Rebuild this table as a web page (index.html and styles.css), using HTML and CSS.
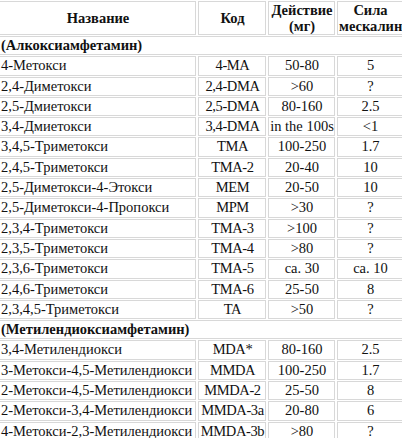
FILE: index.html
```html
<!DOCTYPE html>
<html lang="ru">
<head>
    <meta charset="UTF-8">
    <title>Амфетамины</title>
    <link rel="stylesheet" href="styles.css">
</head>
<body>
    <table class="drugs">
        <colgroup>
            <col class="col-name">
            <col class="col-code">
            <col class="col-dose">
            <col class="col-power">
        </colgroup>
        <thead>
            <tr>
                <th>Название</th>
                <th>Код</th>
                <th>Действие<br>(мг)</th>
                <th>Сила<br>мескалин</th>
            </tr>
        </thead>
        <tbody>
            <tr class="group"><td colspan="4">(Алкоксиамфетамин)</td></tr>
            <tr><td>4-Метокси</td><td>4-MA</td><td>50-80</td><td>5</td></tr>
            <tr><td>2,4-Диметокси</td><td>2,4-DMA</td><td>&gt;60</td><td>?</td></tr>
            <tr><td>2,5-Дмиетокси</td><td>2,5-DMA</td><td>80-160</td><td>2.5</td></tr>
            <tr><td>3,4-Дмиетокси</td><td>3,4-DMA</td><td>in the 100s</td><td>&lt;1</td></tr>
            <tr><td>3,4,5-Триметокси</td><td>TMA</td><td>100-250</td><td>1.7</td></tr>
            <tr><td>2,4,5-Триметокси</td><td>TMA-2</td><td>20-40</td><td>10</td></tr>
            <tr><td>2,5-Диметокси-4-Этокси</td><td>MEM</td><td>20-50</td><td>10</td></tr>
            <tr><td>2,5-Диметокси-4-Пропокси</td><td>MPM</td><td>&gt;30</td><td>?</td></tr>
            <tr><td>2,3,4-Триметокси</td><td>TMA-3</td><td>&gt;100</td><td>?</td></tr>
            <tr><td>2,3,5-Триметокси</td><td>TMA-4</td><td>&gt;80</td><td>?</td></tr>
            <tr><td>2,3,6-Триметокси</td><td>TMA-5</td><td>ca. 30</td><td>ca. 10</td></tr>
            <tr><td>2,4,6-Триметокси</td><td>TMA-6</td><td>25-50</td><td>8</td></tr>
            <tr><td>2,3,4,5-Триметокси</td><td>TA</td><td>&gt;50</td><td>?</td></tr>
            <tr class="group"><td colspan="4">(Метилендиоксиамфетамин)</td></tr>
            <tr><td>3,4-Метилендиокси</td><td>MDA*</td><td>80-160</td><td>2.5</td></tr>
            <tr><td>3-Метокси-4,5-Метилендиокси</td><td>MMDA</td><td>100-250</td><td>1.7</td></tr>
            <tr><td>2-Метокси-4,5-Метилендиокси</td><td>MMDA-2</td><td>25-50</td><td>8</td></tr>
            <tr><td>2-Метокси-3,4-Метилендиокси</td><td>MMDA-3a</td><td>20-80</td><td>6</td></tr>
            <tr><td>4-Метокси-2,3-Метилендиокси</td><td>MMDA-3b</td><td>&gt;80</td><td>?</td></tr>
        </tbody>
    </table>
</body>
</html>
```

FILE: styles.css
```css
body {
    margin: 0;
    background-color: #ffffff;
    color: #111111;
    font-family: "Liberation Serif", "Times New Roman", serif;
    font-size: 14.5px;
    overflow: hidden;
}
.drugs {
    table-layout: fixed;
    width: 408px;
    margin-left: -3px;
    border-collapse: separate;
    border-spacing: 2px 1px;
}
.col-name { width: 197px; }
.col-code { width: 68px; }
.col-dose { width: 67px; }
.col-power { width: 66px; }
.drugs th,
.drugs td {
    border: 1px solid #d8d8d8;
    padding: 0 0 0 1px;
    line-height: 17.3px;
    text-align: center;
    white-space: nowrap;
}
.drugs th {
    font-weight: bold;
    line-height: 16px;
}
.drugs td:first-child {
    text-align: left;
}
.drugs td:nth-child(2) {
    letter-spacing: -0.4px;
}
.drugs .group td {
    font-weight: bold;
    letter-spacing: 0;
}
```
